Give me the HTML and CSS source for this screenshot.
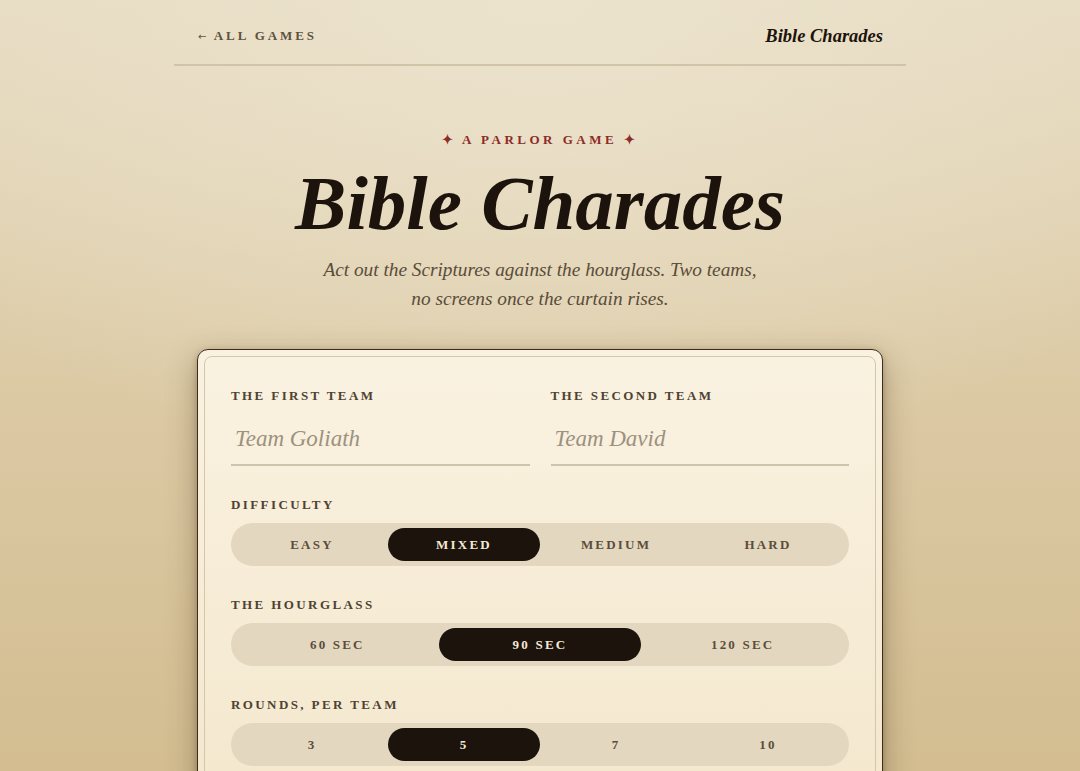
FILE: index.html
```html
<!DOCTYPE html>
<html lang="en">
<head>
<meta charset="utf-8">
<title>Bible Charades</title>
<link rel="stylesheet" href="styles.css">
</head>
<body>
<div class="page">
  <header class="topbar">
    <a class="back" href="#"><span class="arrow">←</span> ALL GAMES</a>
    <span class="brand">Bible Charades</span>
  </header>

  <section class="hero">
    <div class="eyebrow">✦ A PARLOR GAME ✦</div>
    <h1 class="title">Bible Charades</h1>
    <p class="lede">Act out the Scriptures against the hourglass. Two teams,<br>no screens once the curtain rises.</p>
  </section>

  <section class="card">
    <div class="card-inner">
      <div class="teams">
        <label class="field">
          <span class="label">THE FIRST TEAM</span>
          <input class="team-input" type="text" placeholder="Team Goliath">
        </label>
        <label class="field">
          <span class="label">THE SECOND TEAM</span>
          <input class="team-input" type="text" placeholder="Team David">
        </label>
      </div>

      <div class="group">
        <span class="label">DIFFICULTY</span>
        <div class="seg seg-4">
          <button class="opt">EASY</button>
          <button class="opt active">MIXED</button>
          <button class="opt">MEDIUM</button>
          <button class="opt">HARD</button>
        </div>
      </div>

      <div class="group">
        <span class="label">THE HOURGLASS</span>
        <div class="seg seg-3">
          <button class="opt">60 SEC</button>
          <button class="opt active">90 SEC</button>
          <button class="opt">120 SEC</button>
        </div>
      </div>

      <div class="group">
        <span class="label">ROUNDS, PER TEAM</span>
        <div class="seg seg-4">
          <button class="opt">3</button>
          <button class="opt active">5</button>
          <button class="opt">7</button>
          <button class="opt">10</button>
        </div>
      </div>
    </div>
  </section>
</div>
</body>
</html>
```

FILE: styles.css
```css
* { box-sizing: border-box; }

html, body {
  margin: 0;
  padding: 0;
  height: 100%;
}

body {
  font-family: "Liberation Serif", "Times New Roman", serif;
  color: #1c130c;
  background:
    radial-gradient(ellipse 75% 60% at 50% 0%, #ece3cd 0%, rgba(236,227,205,0) 100%),
    linear-gradient(180deg, #e6dbc1 0%, #dccaa5 50%, #d3bd91 100%);
  min-height: 771px;
  overflow: hidden;
}

.page {
  width: 732px;
  margin: 0 auto;
}

.topbar {
  display: flex;
  justify-content: space-between;
  align-items: center;
  height: 66px;
  padding: 8px 23px 0 24px;
  border-bottom: 2px solid #d2c4a8;
}

.back {
  font-size: 13px;
  font-weight: bold;
  letter-spacing: 2.9px;
  color: #5e5140;
  text-decoration: none;
}

.back .arrow {
  font-family: "DejaVu Sans", sans-serif;
  font-size: 10px;
  font-weight: normal;
  letter-spacing: 2px;
}

.brand {
  font-size: 18.5px;
  font-weight: bold;
  font-style: italic;
  color: #1c130c;
}

.hero {
  text-align: center;
  padding-top: 66px;
}

.eyebrow {
  font-size: 13px;
  font-weight: bold;
  letter-spacing: 3.5px;
  color: #8c2b27;
  line-height: 16px;
}

.title {
  margin: 13px 0 0;
  font-size: 77px;
  font-weight: bold;
  font-style: italic;
  line-height: 84px;
  color: #1c130c;
}

.lede {
  margin: 10px 0 0;
  font-size: 19.3px;
  font-style: italic;
  line-height: 29px;
  color: #5a4c3a;
}

.card {
  margin: 36px 23px 0 23px;
  border: 1.5px solid #3b2c1d;
  border-radius: 11px;
  background: linear-gradient(180deg, #faf2e1 0%, #f3e6cb 100%);
  padding: 6px;
  box-shadow: 0 10px 30px rgba(70, 50, 20, 0.38), 0 2px 6px rgba(60, 40, 15, 0.28);
}

.card-inner {
  border: 1.5px solid #d4c6ab;
  border-radius: 8px;
  padding: 31px 26px 40px 26px;
  min-height: 500px;
}

.teams {
  display: grid;
  grid-template-columns: 1fr 1fr;
  gap: 21px;
}

.field {
  display: flex;
  flex-direction: column;
}

.label {
  display: block;
  font-size: 13px;
  font-weight: bold;
  letter-spacing: 2.4px;
  color: #4d4233;
  line-height: 16px;
}

.team-input {
  margin-top: 15px;
  width: 100%;
  border: none;
  border-bottom: 2px solid #cfc3ab;
  background: transparent;
  font-family: "Liberation Serif", "Times New Roman", serif;
  font-style: italic;
  font-size: 23px;
  padding: 7px 4px 12px;
  color: #1c130c;
  outline: none;
}

.team-input::placeholder {
  color: #9c9180;
}

.group {
  margin-top: 31px;
}

.seg {
  display: grid;
  margin-top: 10px;
  height: 43px;
  padding: 5px;
  border-radius: 22px;
  background: #e4d7bf;
}

.seg-4 { grid-template-columns: repeat(4, 1fr); }
.seg-3 { grid-template-columns: repeat(3, 1fr); }

.opt {
  border: none;
  background: transparent;
  font-family: "Liberation Serif", "Times New Roman", serif;
  font-size: 13px;
  font-weight: bold;
  letter-spacing: 2.2px;
  color: #5a4d3c;
  border-radius: 17px;
  padding: 0;
  cursor: pointer;
}

.opt.active {
  background: #1c130c;
  color: #f4ead6;
}

.group + .group { margin-top: 31px; }
```
